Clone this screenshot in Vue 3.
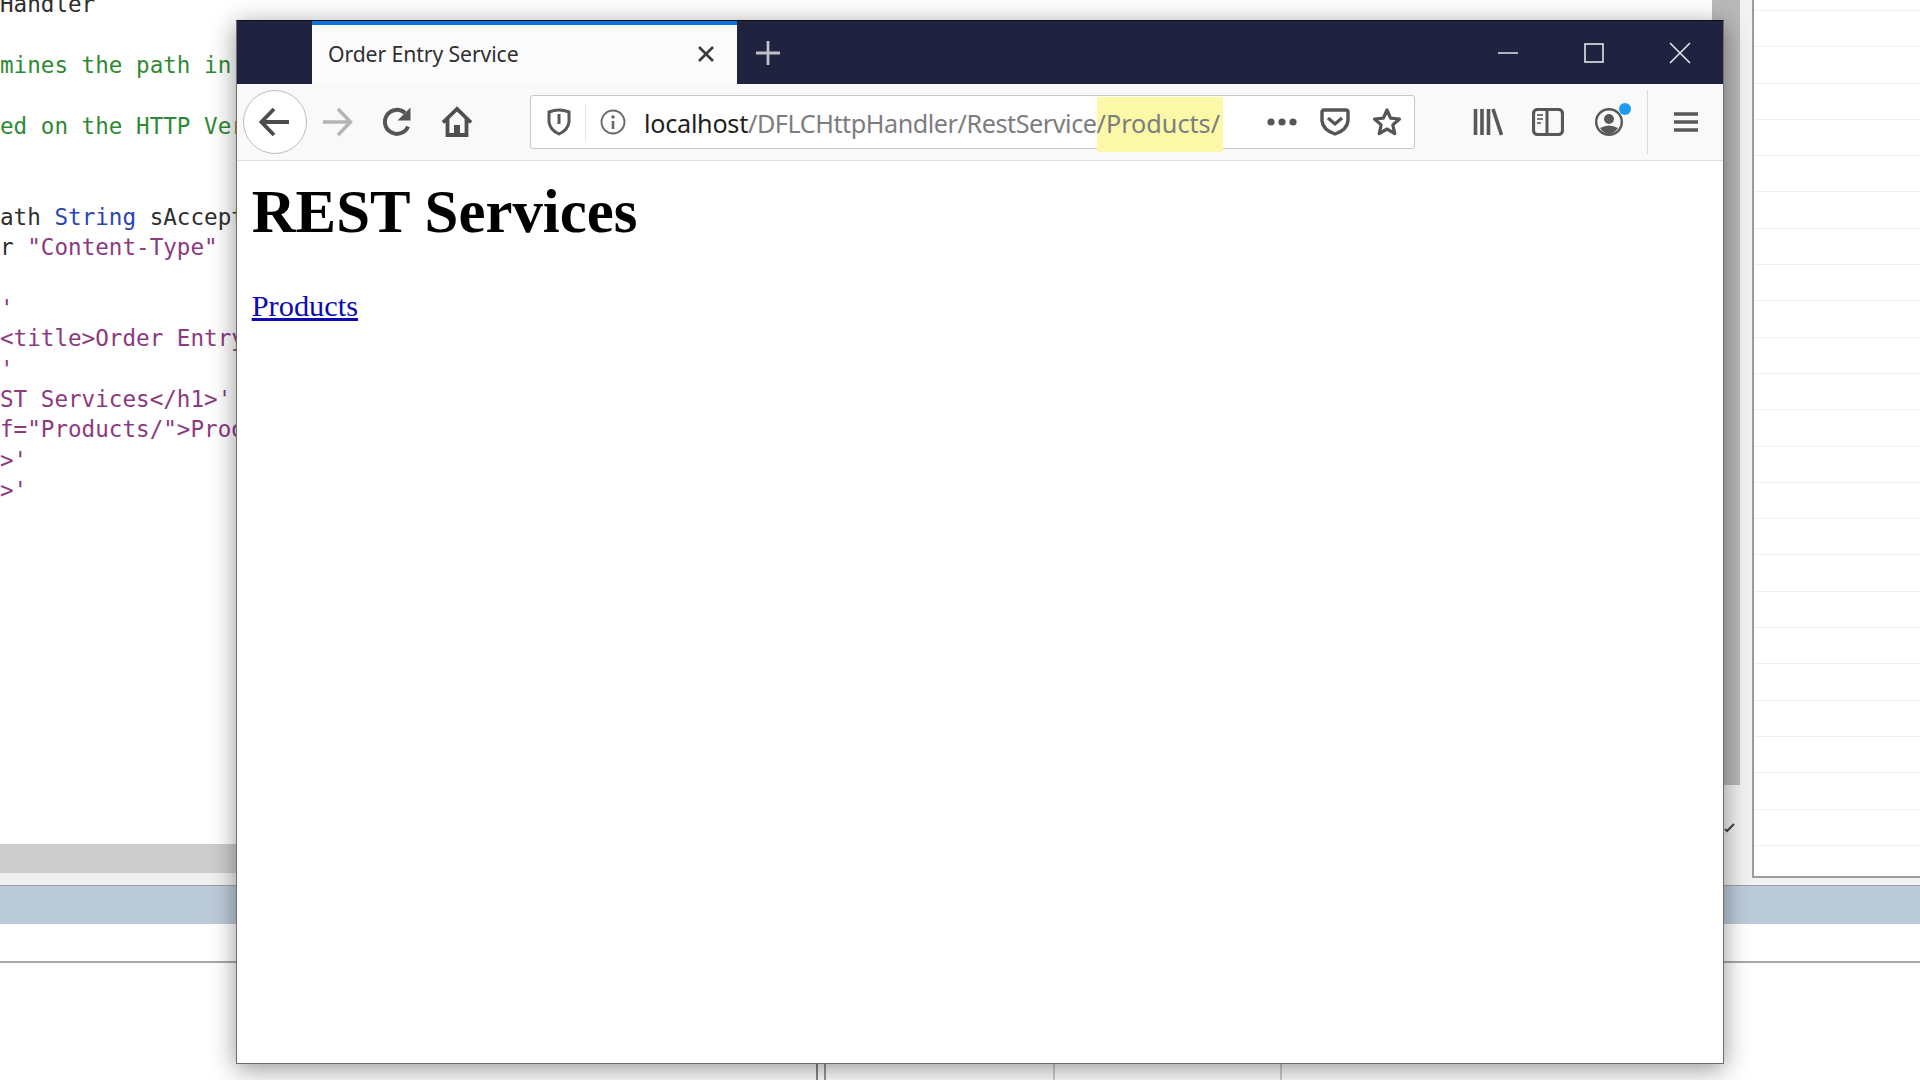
<script setup>
const codeLines = [
  [['t', 'Handler']],
  [],
  [['c', 'mines the path in the request']],
  [],
  [['c', 'ed on the HTTP Verb']],
  [],
  [],
  [['t', 'ath '], ['k', 'String'], ['t', ' sAccept']],
  [['t', 'r '], ['s', '"Content-Type" \'']],
  [],
  [['s', "'"]],
  [['s', '<title>Order Entry Service']],
  [['s', "'"]],
  [['s', 'ST Services</h1>\'']],
  [['s', 'f="Products/">Products']],
  [['s', ">'"]],
  [['s', ">'"]]
]
const panelRows = Array.from({ length: 25 })
</script>

<template>
  <div class="desktop">
    <div class="ide">
      <div class="ide-main">
        <div class="editor">
          <div class="code">
            <div v-for="(line, i) in codeLines" :key="i" class="code-line">
              <span v-for="(part, j) in line" :key="j" :class="part[0]">{{ part[1] }}</span>
            </div>
          </div>
          <div class="hscroll"></div>
          <div class="hstrip"></div>
        </div>
        <div class="vscroll">
          <div class="vthumb"></div>
          <svg class="check" width="12" height="12" viewBox="0 0 12 12"><path d="M1 8 L3 10 L10 3" fill="none" stroke="#444" stroke-width="2" /></svg>
        </div>
        <div class="panel-wrap">
          <div class="panel">
            <div v-for="(r, i) in panelRows" :key="i" class="panel-row"></div>
          </div>
        </div>
      </div>
      <div class="band"></div>
      <div class="under"></div>
      <div class="lower"></div>
      <div class="status">
        <div class="cell c1"></div>
        <div class="cell c2"></div>
        <div class="cell c3"></div>
        <div class="cell c4"></div>
        <div class="cell c5"></div>
      </div>
    </div>

    <div class="window">
      <div class="tabstrip">
        <div class="tab">
          <span class="tab-title">Order Entry Service</span>
          <svg class="tab-close" width="20" height="20" viewBox="0 0 20 20"><path d="M3 3 L17 17 M17 3 L3 17" stroke="#3a3a3c" stroke-width="2.6" fill="none" /></svg>
        </div>
        <div class="newtab">
          <svg width="28" height="28" viewBox="0 0 28 28"><path d="M14 2 V26 M2 14 H26" stroke="#bfc0cc" stroke-width="2.8" fill="none" /></svg>
        </div>
        <div class="winctl">
          <div class="ctl"><svg width="20" height="20" viewBox="0 0 20 20"><path d="M0 10 H20" stroke="#d5d6de" stroke-width="1.6" /></svg></div>
          <div class="ctl"><svg width="20" height="20" viewBox="0 0 20 20"><rect x="1" y="1" width="18" height="18" fill="none" stroke="#e4e5ea" stroke-width="1.6" /></svg></div>
          <div class="ctl"><svg width="22" height="22" viewBox="0 0 22 22"><path d="M1 1 L21 21 M21 1 L1 21" stroke="#e4e5ea" stroke-width="1.6" /></svg></div>
        </div>
      </div>

      <div class="toolbar">
        <div class="back">
          <svg width="32" height="30" viewBox="0 0 32 30"><path d="M30 15 H3 M15 2 L2.5 15 L15 28" fill="none" stroke="#4c4c4e" stroke-width="3.8" /></svg>
        </div>
        <div class="navbtn">
          <svg width="32" height="30" viewBox="0 0 32 30"><path d="M2 15 H29 M17 2 L29.5 15 L17 28" fill="none" stroke="#b4b4b6" stroke-width="3.4" /></svg>
        </div>
        <div class="navbtn">
          <svg width="32" height="32" viewBox="0 0 32 32"><path d="M27 20.5 A12 12 0 1 1 24 7" fill="none" stroke="#555557" stroke-width="4" /><path d="M29.5 1.5 V14.5 H16.5 Z" fill="#555557" /></svg>
        </div>
        <div class="navbtn">
          <svg width="32" height="32" viewBox="0 0 32 32"><path d="M2 16.5 L16 3 L30 16.5" fill="none" stroke="#4f4f51" stroke-width="3.8" /><path d="M6.5 13 V29 H25.5 V13" fill="none" stroke="#4f4f51" stroke-width="3.8" /><rect x="13" y="19" width="6" height="10" fill="#4f4f51" /></svg>
        </div>

        <div class="urlbar">
          <svg class="shield" width="24" height="28" viewBox="0 0 24 28"><path d="M2 4 Q12 0 22 4 V14 Q21 22 12 26 Q3 22 2 14 Z" fill="none" stroke="#585858" stroke-width="3" /><path d="M12 6 V16" stroke="#585858" stroke-width="3" /></svg>
          <div class="url-sep"></div>
          <svg class="info" width="26" height="26" viewBox="0 0 26 26"><circle cx="13" cy="13" r="11.5" fill="none" stroke="#666" stroke-width="1.8" /><circle cx="13" cy="8" r="1.7" fill="#666" /><path d="M13 12 V20" stroke="#666" stroke-width="2.6" /></svg>
          <div class="url-text"><span class="host">localhost</span><span class="path">/DFLCHttpHandler/RestService</span><span class="path hl">/Products/</span></div>
          <div class="url-actions">
            <svg width="32" height="10" viewBox="0 0 32 10"><circle cx="5" cy="5" r="3.6" fill="#555" /><circle cx="16" cy="5" r="3.6" fill="#555" /><circle cx="27" cy="5" r="3.6" fill="#555" /></svg>
            <svg width="30" height="28" viewBox="0 0 30 28"><path d="M4 2 H26 Q28 2 28 4 V13 Q27 22 15 26 Q3 22 2 13 V4 Q2 2 4 2 Z" fill="none" stroke="#555" stroke-width="3.4" /><path d="M8 10 L15 16 L22 10" fill="none" stroke="#555" stroke-width="3.2" /></svg>
            <svg width="30" height="30" viewBox="0 0 30 30"><path d="M15 3 L18.6 11.2 L27.5 12 L20.8 17.9 L22.8 26.6 L15 22 L7.2 26.6 L9.2 17.9 L2.5 12 L11.4 11.2 Z" fill="none" stroke="#555" stroke-width="3.2" stroke-linejoin="round" /></svg>
          </div>
        </div>

        <div class="tools">
          <svg class="tool lib" width="30" height="28" viewBox="0 0 30 28"><path d="M2.5 1 V27 M9 1 V27 M15.5 1 V27 M20 1 L28.5 27" fill="none" stroke="#585858" stroke-width="3.6" /></svg>
          <svg class="tool side" width="32" height="28" viewBox="0 0 32 28"><rect x="1.5" y="1.5" width="29" height="25" rx="4" fill="none" stroke="#585858" stroke-width="3.2" /><path d="M15 1.5 V26.5" stroke="#585858" stroke-width="3" /><path d="M5 7 H11 M5 11 H11 M5 15 H9" stroke="#777" stroke-width="2" /></svg>
          <div class="tool account">
            <svg width="30" height="30" viewBox="0 0 30 30"><circle cx="15" cy="15" r="12.8" fill="none" stroke="#585858" stroke-width="2.4" /><circle cx="15" cy="12" r="5" fill="#585858" /><path d="M6 21 Q15 16 24 21 Q20 27 15 27 Q10 27 6 21 Z" fill="#585858" /></svg>
            <span class="dot"></span>
          </div>
          <div class="tool-sep"></div>
          <svg class="tool burger" width="24" height="24" viewBox="0 0 24 24"><path d="M0 4 H24 M0 12 H24 M0 20 H24" stroke="#585858" stroke-width="3.6" /></svg>
        </div>
      </div>

      <div class="page">
        <h1 class="title">REST Services</h1>
        <a class="link">Products</a>
      </div>
    </div>
  </div>
</template>

<style>
html, body { margin: 0; padding: 0; background: #fff; overflow: hidden; }
</style>

<style scoped>
.desktop {
  position: relative;
  width: 1920px;
  height: 1080px;
  overflow: hidden;
  background: #fff;
}
.ide {
  display: flex;
  flex-direction: column;
  height: 1080px;
}
.ide-main {
  display: flex;
  height: 885px;
  border-bottom: 1px solid #9aa0a6;
}
.editor {
  width: 1712px;
  display: flex;
  flex-direction: column;
}
.code {
  height: 844px;
  overflow: hidden;
  font-family: "DejaVu Sans Mono", monospace;
  font-size: 22.6px;
  line-height: 30.4px;
  white-space: pre;
  color: #2e2e2e;
}
.code-line { height: 30.4px; position: relative; top: -11px; }
.c { color: #2f8a35; }
.k { color: #2c45b5; }
.s { color: #8b3a7f; }
.hscroll { height: 29px; background: #cdcdcd; }
.hstrip { height: 12px; background: #f0f0f0; }
.vscroll {
  width: 28px;
  background: #f0f0f0;
  position: relative;
}
.vthumb { height: 785px; background: #b9b9b9; }
.check { position: absolute; left: 12px; top: 821px; }
.panel-wrap {
  flex: 1;
  background: #f2f2f2;
  padding-left: 12px;
  padding-bottom: 7px;
}
.panel {
  height: 100%;
  background: #fff;
  border-left: 2px solid #9c9c9c;
  border-bottom: 2px solid #9c9c9c;
  box-sizing: border-box;
  overflow: hidden;
}
.panel-row {
  height: 36.3px;
  box-sizing: border-box;
  border-bottom: 1px solid #f0f0f0;
}
.panel-row:first-child { height: 11px; }
.band { height: 38px; background: #bccbda; }
.under { height: 37px; background: #fff; border-bottom: 2px solid #a8a8a8; }
.lower { flex: 1; background: #fff; }
.status {
  display: flex;
  height: 16px;
  background: #fff;
}
.cell { box-sizing: border-box; height: 100%; }
.c1 { width: 816px; }
.c2 { width: 8px; border-left: 2px solid #888; }
.c3 { width: 229px; border-left: 2px solid #999; }
.c4 { width: 227px; border-left: 2px solid #d0d0d0; }
.c5 { flex: 1; border-left: 2px solid #d0d0d0; }

.window {
  position: absolute;
  left: 236px;
  top: 20px;
  width: 1488px;
  height: 1044px;
  box-sizing: border-box;
  background: #fff;
  border: 1px solid #6e6e6e;
  border-top-color: #111;
  box-shadow: 0 5px 24px rgba(0, 0, 0, 0.42);
  display: flex;
  flex-direction: column;
}
.tabstrip {
  height: 63px;
  background: #20233f;
  display: flex;
  padding-left: 75px;
  flex-shrink: 0;
}
.tab {
  width: 425px;
  box-sizing: border-box;
  background: #fbfbfc;
  border-top: 4px solid #0a74d9;
  display: flex;
  align-items: center;
  justify-content: space-between;
  padding: 0 21px 2px 16px;
}
.tab-title {
  font-family: "Noto Sans", sans-serif;
  font-size: 21.2px;
  color: #2f2f31;
  letter-spacing: -0.1px;
}
.newtab {
  width: 62px;
  display: flex;
  align-items: center;
  justify-content: center;
}
.winctl {
  display: flex;
  margin-left: auto;
}
.ctl {
  width: 86px;
  display: flex;
  align-items: center;
  justify-content: center;
}
.toolbar {
  height: 77px;
  background: #f9f9fa;
  border-bottom: 1px solid #dedee0;
  display: flex;
  align-items: center;
  box-sizing: border-box;
  padding-left: 6px;
  flex-shrink: 0;
}
.back {
  width: 64px;
  height: 64px;
  box-sizing: border-box;
  background: #fff;
  border: 1.5px solid #bdbdbf;
  border-radius: 50%;
  display: flex;
  align-items: center;
  justify-content: center;
  flex-shrink: 0;
}
.navbtn {
  width: 60px;
  display: flex;
  justify-content: center;
  flex-shrink: 0;
}
.urlbar {
  margin-left: 43px;
  width: 885px;
  height: 54px;
  box-sizing: border-box;
  background: #fff;
  border: 1px solid #c8c8ca;
  border-radius: 3px;
  display: flex;
  align-items: center;
  flex-shrink: 0;
}
.shield { margin-left: 16px; }
.url-sep { width: 1px; height: 38px; background: #e4e4e6; margin-left: 14px; }
.info { margin-left: 14px; }
.url-text {
  margin-left: 18px;
  font-family: "Noto Sans", sans-serif;
  font-size: 25.2px;
  letter-spacing: -0.27px;
  white-space: nowrap;
  padding-top: 2px;
}
.host { color: #1f1f21; }
.path { color: #7d7d80; letter-spacing: -0.45px; }
.hl {
  background: #fbf8a8;
  letter-spacing: 0;
  padding: 9px 3px 12px 0;
}
.url-actions {
  margin-left: auto;
  display: flex;
  align-items: center;
  gap: 22px;
  padding-right: 12px;
}
.tools {
  display: flex;
  align-items: center;
  margin-left: 58px;
}
.tool { flex-shrink: 0; }
.side { margin-left: 29px; }
.account { margin-left: 30px; position: relative; display: flex; }
.dot {
  position: absolute;
  right: -7px;
  top: -4px;
  width: 12px;
  height: 12px;
  border-radius: 50%;
  background: #1d9bf0;
}
.tool-sep { width: 1px; height: 64px; background: #dcdcde; margin-left: 23px; }
.burger { margin-left: 26px; }
.page {
  flex: 1;
  padding: 0 14.7px;
  font-family: "Liberation Serif", serif;
  color: #000;
}
.title {
  font-size: 60.8px;
  font-weight: 700;
  line-height: 67px;
  margin: 17px 0 0;
}
.link {
  display: block;
  font-size: 30.4px;
  line-height: 35px;
  margin-top: 44px;
  color: #0b0bb0;
  text-decoration: underline;
}
</style>
